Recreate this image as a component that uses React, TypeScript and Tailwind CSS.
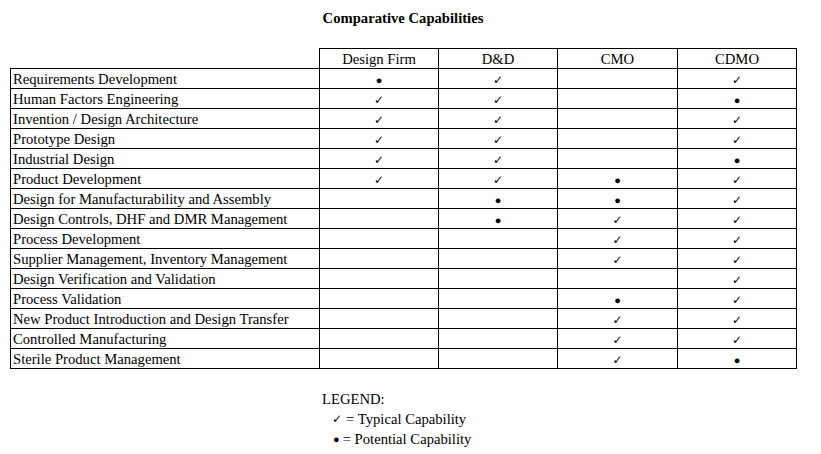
import React from "react";

type Mark = "c" | "d" | "";

const rows: [string, Mark, Mark, Mark, Mark][] = [
  ["Requirements Development", "d", "c", "", "c"],
  ["Human Factors Engineering", "c", "c", "", "d"],
  ["Invention / Design Architecture", "c", "c", "", "c"],
  ["Prototype Design", "c", "c", "", "c"],
  ["Industrial Design", "c", "c", "", "d"],
  ["Product Development", "c", "c", "d", "c"],
  ["Design for Manufacturability and Assembly", "", "d", "d", "c"],
  ["Design Controls, DHF and DMR Management", "", "d", "c", "c"],
  ["Process Development", "", "", "c", "c"],
  ["Supplier Management, Inventory Management", "", "", "c", "c"],
  ["Design Verification and Validation", "", "", "", "c"],
  ["Process Validation", "", "", "d", "c"],
  ["New Product Introduction and Design Transfer", "", "", "c", "c"],
  ["Controlled Manufacturing", "", "", "c", "c"],
  ["Sterile Product Management", "", "", "c", "d"],
];

function Check() {
  return (
    <span className="inline-block align-middle font-['DejaVu_Sans',sans-serif] text-[12px] leading-none text-black">
      ✓
    </span>
  );
}

function Dot() {
  return (
    <span className="inline-block align-middle font-['Liberation_Serif',serif] text-[11px] leading-none text-black">
      ●
    </span>
  );
}

function MarkCell({ m }: { m: Mark }) {
  return (
    <td className="h-[20px] border border-black p-0 text-center leading-[18px]">
      {m === "c" ? <Check /> : m === "d" ? <Dot /> : null}
    </td>
  );
}

export default function App() {
  return (
    <div className="min-h-[454px] w-[821px] bg-white font-['Liberation_Serif',serif] text-[14.67px] text-black">
      <div className="ml-[10px] w-[786px] pt-[10px]">
        <div className="text-center text-[14.67px] font-bold leading-[17px]">Comparative Capabilities</div>
        <table className="mt-[21px] w-[786px] table-fixed border-collapse">
          <colgroup>
            <col className="w-[309px]" />
            <col className="w-[119px]" />
            <col className="w-[119px]" />
            <col className="w-[120px]" />
            <col className="w-[119px]" />
          </colgroup>
          <thead>
            <tr>
              <th className="h-[20px] p-0"></th>
              <th className="h-[20px] border border-black p-0 text-center font-normal leading-[18px]">Design Firm</th>
              <th className="h-[20px] border border-black p-0 text-center font-normal leading-[18px]">D&amp;D</th>
              <th className="h-[20px] border border-black p-0 text-center font-normal leading-[18px]">CMO</th>
              <th className="h-[20px] border border-black p-0 text-center font-normal leading-[18px]">CDMO</th>
            </tr>
          </thead>
          <tbody>
            {rows.map((r) => (
              <tr key={r[0]}>
                <td className="h-[20px] border border-black py-0 pl-[2px] pr-0 text-left leading-[18px] whitespace-nowrap">{r[0]}</td>
                <MarkCell m={r[1]} />
                <MarkCell m={r[2]} />
                <MarkCell m={r[3]} />
                <MarkCell m={r[4]} />
              </tr>
            ))}
          </tbody>
        </table>
        <div className="ml-[312px] mt-[20px] leading-[20px]">
          <div>LEGEND:</div>
          <div className="flex items-center pl-[10px]">
            <Check />
            <span className="ml-[4px]">= Typical Capability</span>
          </div>
          <div className="flex items-center pl-[11px]">
            <Dot />
            <span className="ml-[3px]">= Potential Capability</span>
          </div>
        </div>
      </div>
    </div>
  );
}
